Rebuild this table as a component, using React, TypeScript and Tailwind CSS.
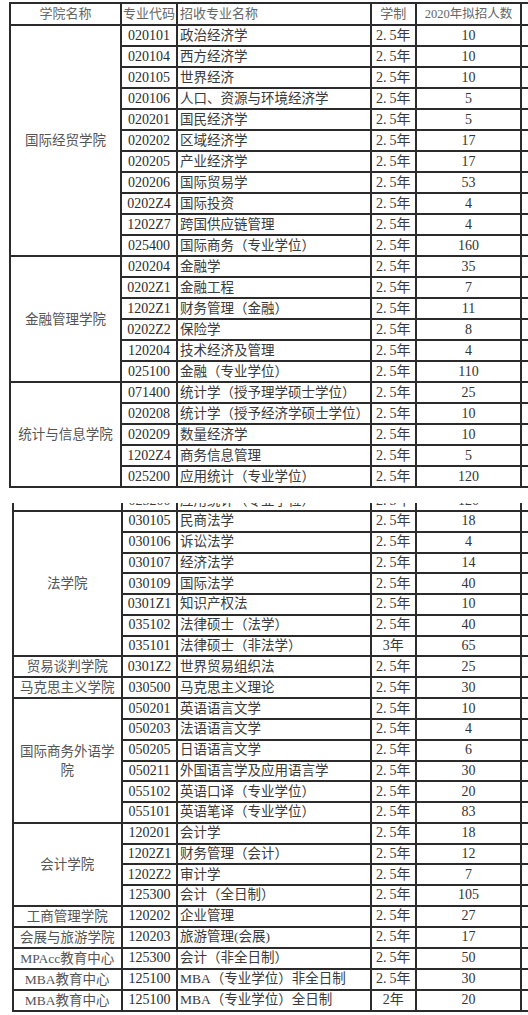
import type { ReactNode } from "react"

type Row = [string, string, string, string]

interface Group {
  college: ReactNode
  rows: Row[]
}

const Y = "2.5年"

const upperGroups: Group[] = [
  {
    college: "国际经贸学院",
    rows: [
      ["020101", "政治经济学", Y, "10"],
      ["020104", "西方经济学", Y, "10"],
      ["020105", "世界经济", Y, "10"],
      ["020106", "人口、资源与环境经济学", Y, "5"],
      ["020201", "国民经济学", Y, "5"],
      ["020202", "区域经济学", Y, "17"],
      ["020205", "产业经济学", Y, "17"],
      ["020206", "国际贸易学", Y, "53"],
      ["0202Z4", "国际投资", Y, "4"],
      ["1202Z7", "跨国供应链管理", Y, "4"],
      ["025400", "国际商务（专业学位）", Y, "160"],
    ],
  },
  {
    college: "金融管理学院",
    rows: [
      ["020204", "金融学", Y, "35"],
      ["0202Z1", "金融工程", Y, "7"],
      ["1202Z1", "财务管理（金融）", Y, "11"],
      ["0202Z2", "保险学", Y, "8"],
      ["120204", "技术经济及管理", Y, "4"],
      ["025100", "金融（专业学位）", Y, "110"],
    ],
  },
  {
    college: "统计与信息学院",
    rows: [
      ["071400", "统计学（授予理学硕士学位）", Y, "25"],
      ["020208", "统计学（授予经济学硕士学位）", Y, "10"],
      ["020209", "数量经济学", Y, "10"],
      ["1202Z4", "商务信息管理", Y, "5"],
      ["025200", "应用统计（专业学位）", Y, "120"],
    ],
  },
]

const lowerGroups: Group[] = [
  {
    college: "法学院",
    rows: [
      ["030105", "民商法学", Y, "18"],
      ["030106", "诉讼法学", Y, "4"],
      ["030107", "经济法学", Y, "14"],
      ["030109", "国际法学", Y, "40"],
      ["0301Z1", "知识产权法", Y, "10"],
      ["035102", "法律硕士（法学）", Y, "40"],
      ["035101", "法律硕士（非法学）", "3年", "65"],
    ],
  },
  { college: "贸易谈判学院", rows: [["0301Z2", "世界贸易组织法", Y, "25"]] },
  { college: "马克思主义学院", rows: [["030500", "马克思主义理论", Y, "30"]] },
  {
    college: (
      <>
        国际商务外语学
        <br />院
      </>
    ),
    rows: [
      ["050201", "英语语言文学", Y, "10"],
      ["050203", "法语语言文学", Y, "4"],
      ["050205", "日语语言文学", Y, "6"],
      ["050211", "外国语言学及应用语言学", Y, "30"],
      ["055102", "英语口译（专业学位）", Y, "20"],
      ["055101", "英语笔译（专业学位）", Y, "83"],
    ],
  },
  {
    college: "会计学院",
    rows: [
      ["120201", "会计学", Y, "18"],
      ["1202Z1", "财务管理（会计）", Y, "12"],
      ["1202Z2", "审计学", Y, "7"],
      ["125300", "会计（全日制）", Y, "105"],
    ],
  },
  { college: "工商管理学院", rows: [["120202", "企业管理", Y, "27"]] },
  { college: "会展与旅游学院", rows: [["120203", "旅游管理(会展)", Y, "17"]] },
  { college: "MPAcc教育中心", rows: [["125300", "会计（非全日制）", Y, "50"]] },
  { college: "MBA教育中心", rows: [["125100", "MBA（专业学位）非全日制", Y, "30"]] },
  { college: "MBA教育中心", rows: [["125100", "MBA（专业学位）全日制", "2年", "20"]] },
]

const line = "border-2 border-[#2b2b2b]"

function Years({ value }: { value: string }) {
  // the source font sets ascii half-width, so the dot takes a full digit slot
  if (value === Y)
    return (
      <>
        2<span className="mr-[3px]">.</span>5年
      </>
    )
  return <>{value}</>
}

function GroupRows({ group, rowClass }: { group: Group; rowClass: string }) {
  return (
    <>
      {group.rows.map((row, i) => (
        <tr key={row[0] + i} className={rowClass}>
          {i === 0 && (
            <td
              rowSpan={group.rows.length}
              className={`${line} text-center text-[13.5px] leading-[19px] text-[#555] whitespace-nowrap`}
            >
              {group.college}
            </td>
          )}
          <td className={`${line} text-center text-[14px] text-[#2b2b2b]`}>{row[0]}</td>
          <td className={`${line} pl-[2px] text-[13.5px] text-[#3a3a3a] whitespace-nowrap`}>{row[1]}</td>
          <td className={`${line} text-center text-[14px] text-[#3a3a3a] whitespace-nowrap`}>
            <Years value={row[2]} />
          </td>
          <td className={`${line} text-center text-[14px] text-[#333]`}>{row[3]}</td>
          <td className={line} />
        </tr>
      ))}
    </>
  )
}

function Cut({ children, center = true }: { children: ReactNode; center?: boolean }) {
  return (
    <td className="border-x-2 border-b-2 border-[#2b2b2b] p-0 align-top">
      <div className="h-[6px] overflow-hidden">
        <div className={`-mt-[12px] leading-[18px] whitespace-nowrap ${center ? "text-center" : "pl-[2px]"}`}>
          {children}
        </div>
      </div>
    </td>
  )
}

export default function App() {
  return (
    <div className="w-[528px] h-[1015px] overflow-hidden bg-white font-['Liberation_Serif','Noto_Sans_CJK_SC',serif] leading-[18px]">
      {/* first sheet */}
      <table className="table-fixed w-[541px] ml-[9px] mt-[2px]">
        <colgroup>
          <col className="w-[111px]" />
          <col className="w-[56px]" />
          <col className="w-[193.5px]" />
          <col className="w-[45.5px]" />
          <col className="w-[105px]" />
          <col className="w-[30px]" />
        </colgroup>
        <tbody>
          <tr className="h-[22px] text-[#666]">
            <td className={`${line} text-center text-[13px]`}>学院名称</td>
            <td className={`${line} text-center text-[13px] whitespace-nowrap`}>专业代码</td>
            <td className={`${line} pl-[2px] text-[13px]`}>招收专业名称</td>
            <td className={`${line} text-center text-[13px]`}>学制</td>
            <td className={`${line} text-center text-[12.5px] whitespace-nowrap`}>2020年拟招人数</td>
            <td className={line} />
          </tr>
          {upperGroups.map((g, i) => (
            <GroupRows key={i} group={g} rowClass="h-[21px]" />
          ))}
        </tbody>
      </table>

      {/* second sheet, starts with the tail of the previous row */}
      <table className="table-fixed w-[539px] ml-[11.5px] mt-[15px]">
        <colgroup>
          <col className="w-[109.5px]" />
          <col className="w-[55px]" />
          <col className="w-[193.5px]" />
          <col className="w-[45.5px]" />
          <col className="w-[105px]" />
          <col className="w-[30px]" />
        </colgroup>
        <tbody>
          <tr className="h-[8px] text-[#3a3a3a]">
            <td className="border-x-2 border-b-2 border-[#2b2b2b]" />
            <Cut>
              <span className="text-[14px]">025200</span>
            </Cut>
            <Cut center={false}>
              <span className="text-[13.5px]">应用统计（专业学位）</span>
            </Cut>
            <Cut>
              <span className="text-[14px]">
                <Years value={Y} />
              </span>
            </Cut>
            <Cut>
              <span className="text-[14px]">120</span>
            </Cut>
            <td className="border-x-2 border-b-2 border-[#2b2b2b]" />
          </tr>
          {lowerGroups.map((g, i) => (
            <GroupRows key={i} group={g} rowClass="h-[20.75px]" />
          ))}
        </tbody>
      </table>
    </div>
  )
}
